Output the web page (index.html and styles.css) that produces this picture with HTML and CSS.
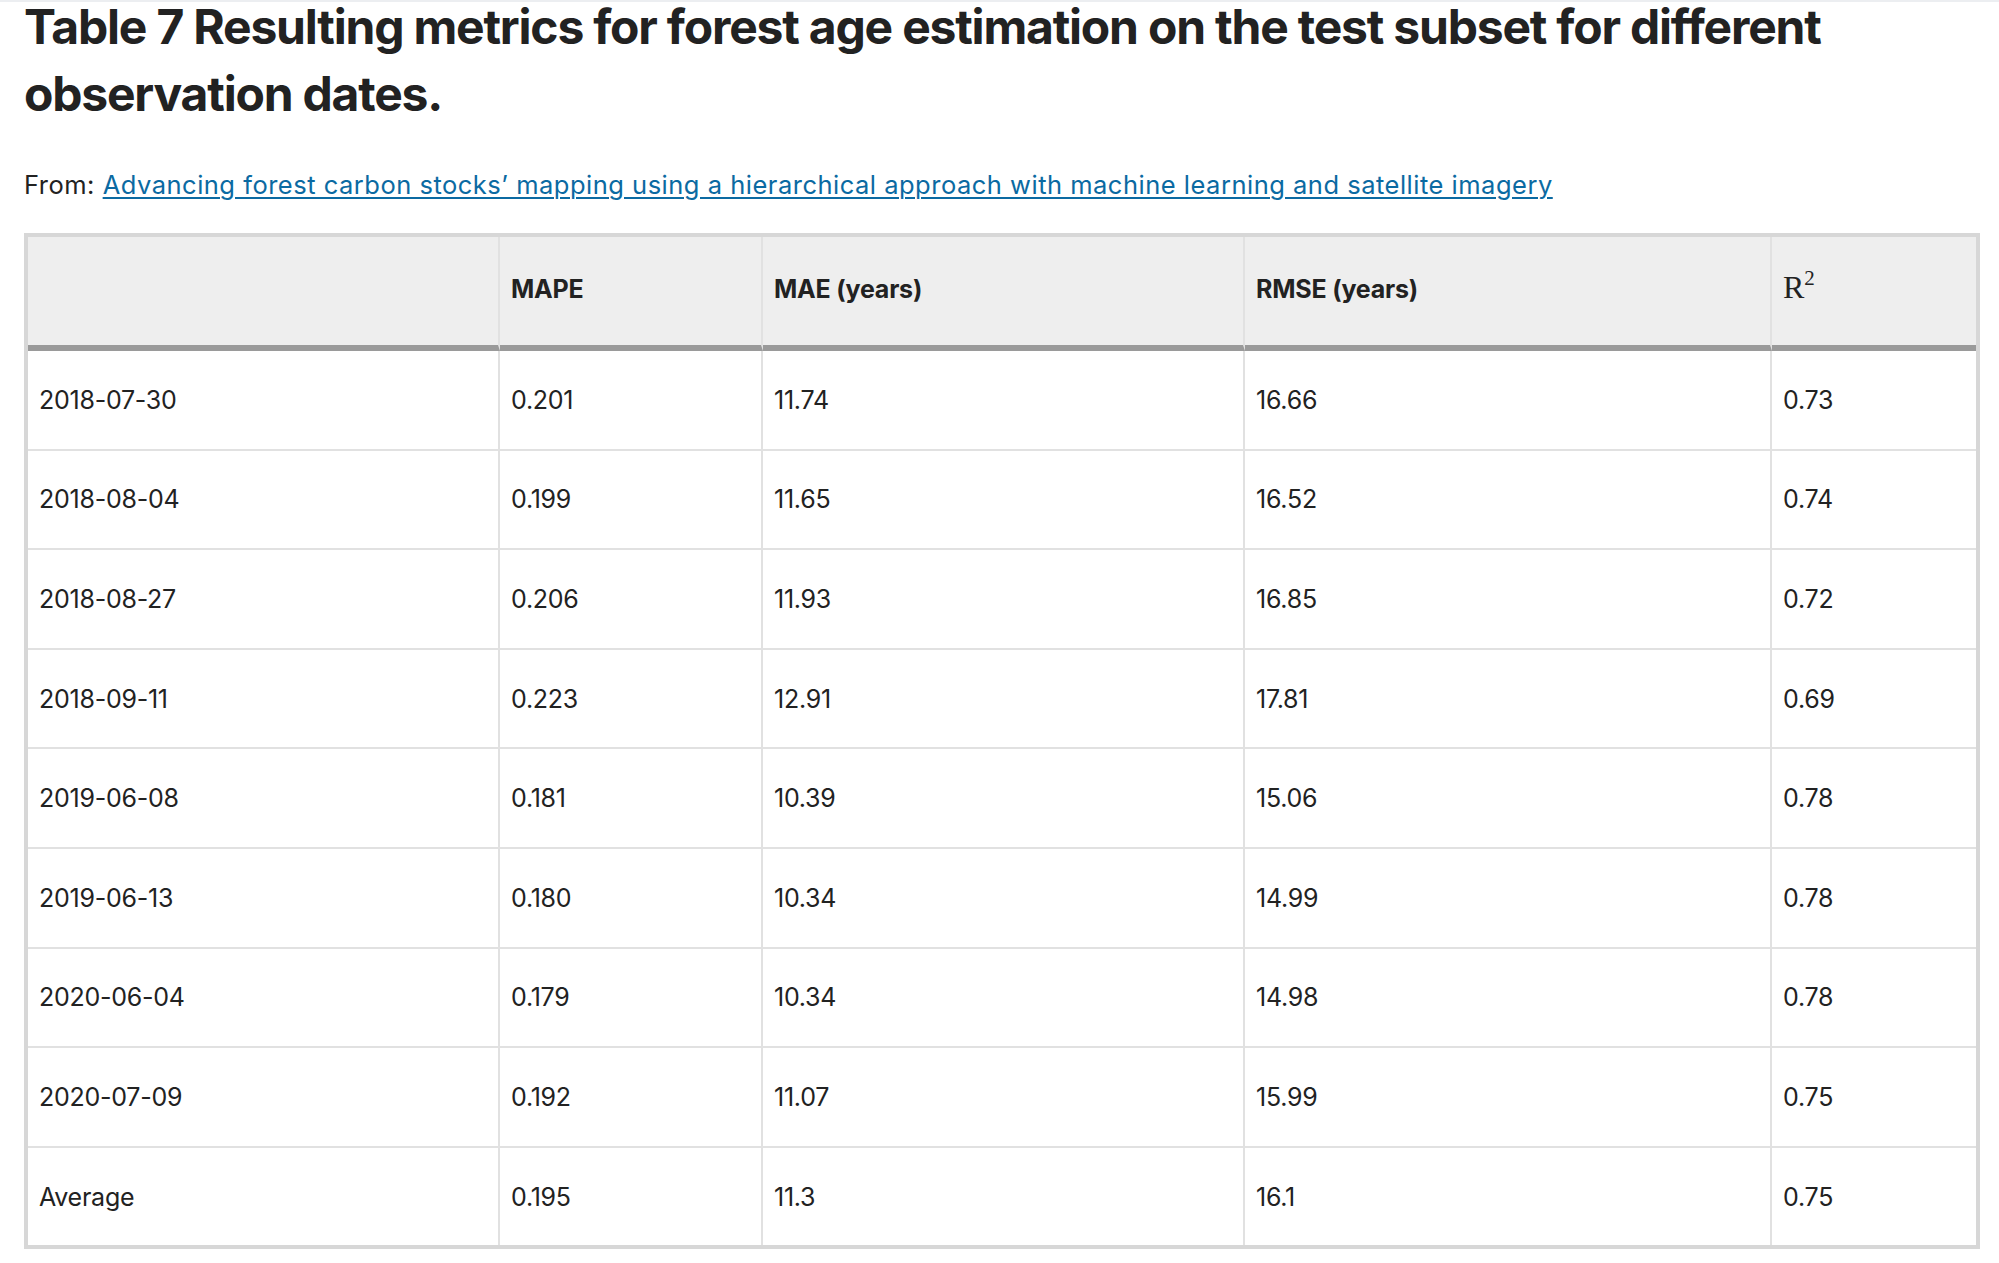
FILE: index.html
```html
<!DOCTYPE html>
<html lang="en">
<head>
<meta charset="utf-8">
<title>Table 7 Resulting metrics for forest age estimation</title>
<link rel="stylesheet" href="styles.css">
</head>
<body>
<div class="topline"></div>
<main class="page">
  <h1 class="title">Table 7 Resulting metrics for forest age estimation on the test subset for different observation dates.</h1>
  <p class="source">From: <a class="source-link" href="#">Advancing forest carbon stocks’ mapping using a hierarchical approach with machine learning and satellite imagery</a></p>
  <table class="data">
    <colgroup>
      <col class="c1"><col class="c2"><col class="c3"><col class="c4"><col class="c5">
    </colgroup>
    <thead>
      <tr><th></th><th>MAPE</th><th>MAE (years)</th><th>RMSE (years)</th><th class="math"><span class="r">R</span><sup>2</sup></th></tr>
    </thead>
    <tbody>
      <tr><td>2018-07-30</td><td>0.201</td><td>11.74</td><td>16.66</td><td>0.73</td></tr>
      <tr><td>2018-08-04</td><td>0.199</td><td>11.65</td><td>16.52</td><td>0.74</td></tr>
      <tr><td>2018-08-27</td><td>0.206</td><td>11.93</td><td>16.85</td><td>0.72</td></tr>
      <tr><td>2018-09-11</td><td>0.223</td><td>12.91</td><td>17.81</td><td>0.69</td></tr>
      <tr><td>2019-06-08</td><td>0.181</td><td>10.39</td><td>15.06</td><td>0.78</td></tr>
      <tr><td>2019-06-13</td><td>0.180</td><td>10.34</td><td>14.99</td><td>0.78</td></tr>
      <tr><td>2020-06-04</td><td>0.179</td><td>10.34</td><td>14.98</td><td>0.78</td></tr>
      <tr><td>2020-07-09</td><td>0.192</td><td>11.07</td><td>15.99</td><td>0.75</td></tr>
      <tr><td>Average</td><td>0.195</td><td>11.3</td><td>16.1</td><td>0.75</td></tr>
    </tbody>
  </table>
</main>
</body>
</html>
```

FILE: styles.css
```css
html, body {
  margin: 0;
  padding: 0;
  background: #ffffff;
}

body {
  font-family: Inter, "Liberation Sans", Arial, sans-serif;
  color: #222222;
  overflow: hidden;
}

.topline {
  height: 2px;
  background: #eceef1;
}

.page {
  padding: 0 19px 0 24px;
}

.title {
  margin: -9px 0 0 0;
  font-size: 48px;
  line-height: 67px;
  font-weight: 700;
  letter-spacing: -1.2px;
  color: #222222;
}

.source {
  margin: 40px 0 0 0;
  font-size: 25.5px;
  line-height: 35px;
  letter-spacing: 0.5px;
  color: #222222;
}

.source-link {
  color: #0b6aa2;
  text-decoration: underline;
  text-decoration-thickness: 2px;
  text-underline-offset: 3px;
}

.data {
  margin-top: 31px;
  width: 1956px;
  table-layout: fixed;
  border-collapse: separate;
  border-spacing: 0;
  border: 4px solid #d7d7d7;
  font-size: 25px;
  line-height: 30px;
  color: #222222;
}

.c1 { width: 472px; }
.c2 { width: 263px; }
.c3 { width: 482px; }
.c4 { width: 527px; }
.c5 { width: 204px; }

.data th,
.data td {
  text-align: left;
  vertical-align: middle;
  padding: 0 11px;
  border-right: 2px solid #e1e1e1;
}

.data th:last-child,
.data td:last-child {
  border-right: none;
}

.data th {
  background: #eeeeee;
  font-weight: 700;
  letter-spacing: -0.2px;
  padding-top: 35px;
  padding-bottom: 40px;
  border-bottom: 6px solid #9a9a9a;
}

.data td {
  letter-spacing: -0.25px;
  padding-top: 33.8px;
  padding-bottom: 33.8px;
  border-bottom: 2px solid #e1e1e1;
}

.data tbody tr:last-child td {
  border-bottom: none;
}

.data th.math {
  font-family: "Liberation Serif", "Times New Roman", serif;
  font-weight: 400;
  letter-spacing: 0;
}

.math .r {
  font-size: 32px;
}

.math sup {
  font-size: 21px;
  vertical-align: 13px;
  line-height: 0;
}
```
